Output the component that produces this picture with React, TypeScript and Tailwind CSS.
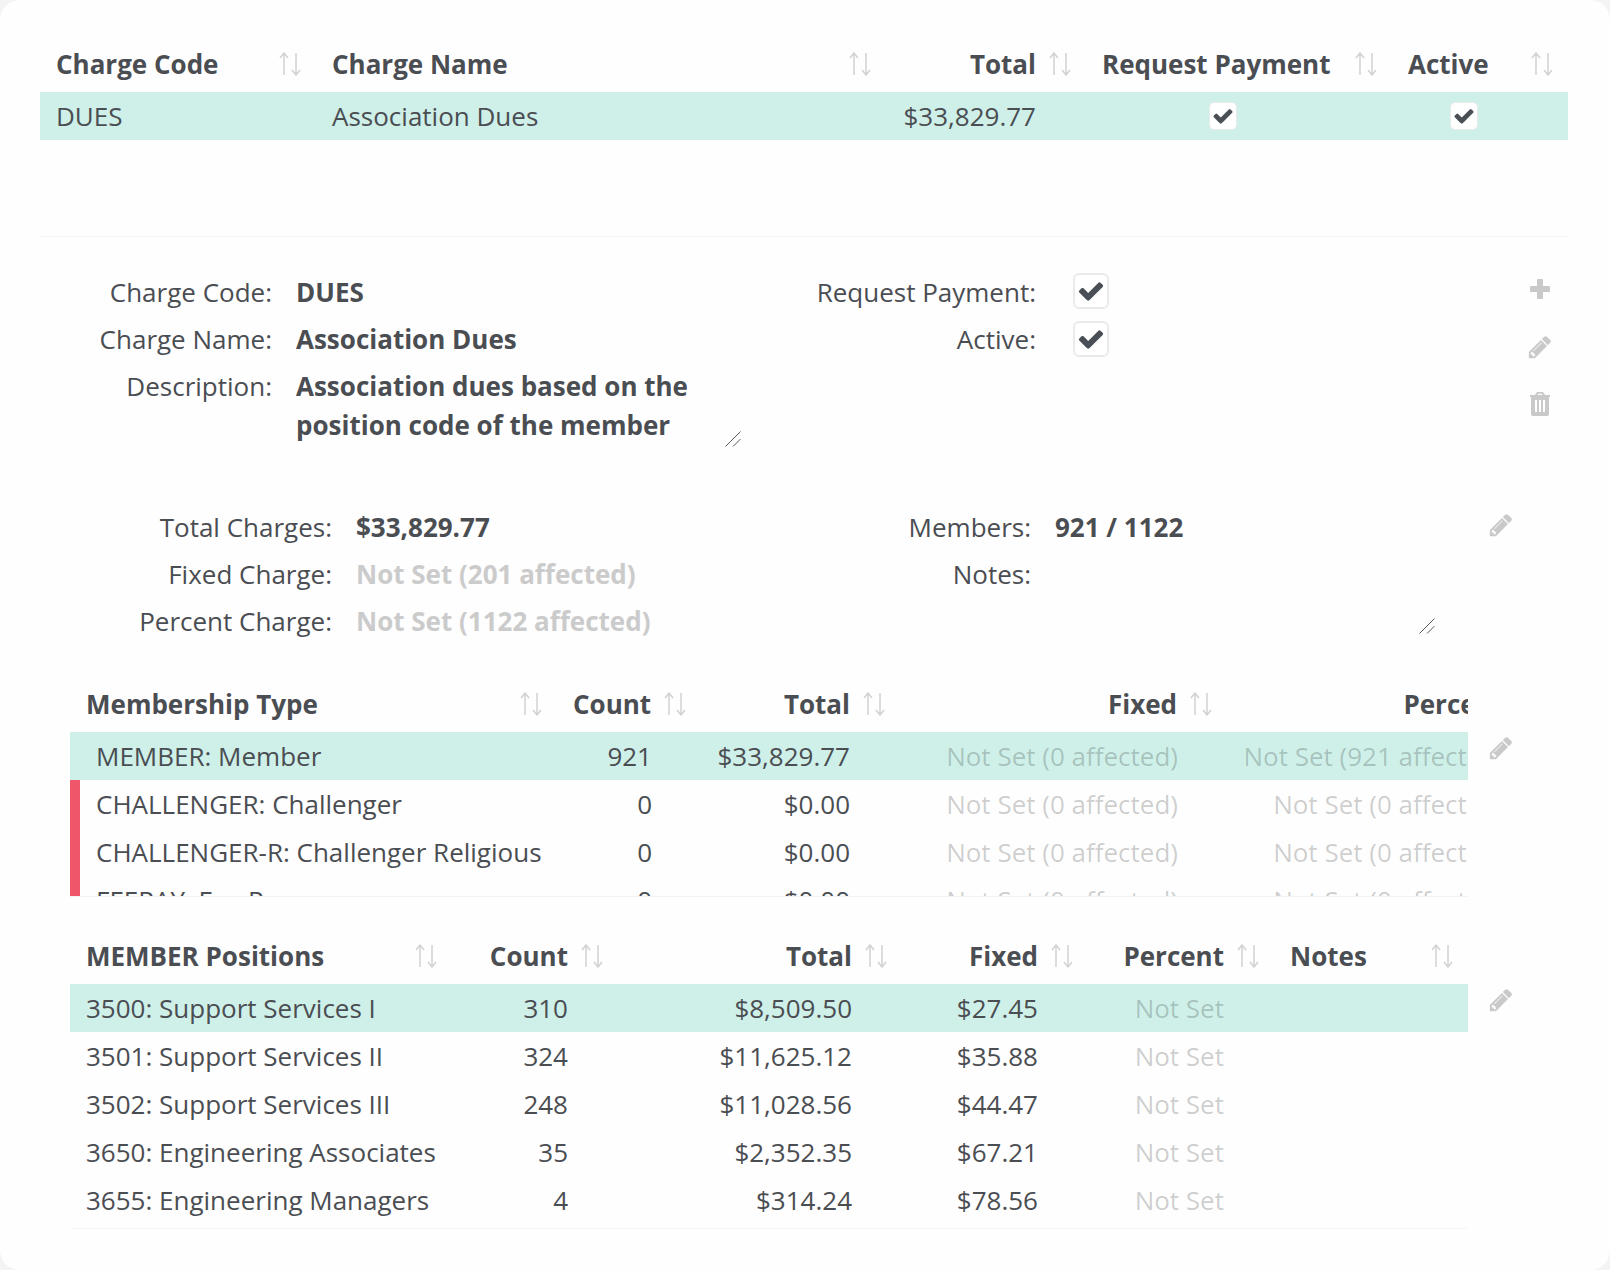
import React from "react";

function SortIcon() {
  return (
    <svg width="24" height="24" viewBox="0 0 24 24" fill="none" stroke="#d2d2d2" strokeWidth="1.5" className="shrink-0">
      <path d="M6 23V1M2 6l4-5 4 5" />
      <path d="M18 1v22M14 18l4 5 4-5" />
    </svg>
  );
}
function Pencil({ size = 26 }: { size?: number }) {
  return (
    <svg width={size} height={size} viewBox="0 0 1792 1792" fill="#c9c9c9" className="block">
      <path d="M491 1536l91-91-235-235-91 91v107h128v128h107zm523-928q0-22-22-22-10 0-17 7l-542 542q-7 7-7 17 0 22 22 22 10 0 17-7l542-542q7-7 7-17zm-54-192l416 416-832 832H128v-416zm683 96q0 53-37 90l-166 166-416-416 166-165q36-38 90-38 53 0 91 38l235 234q37 39 37 91z" />
    </svg>
  );
}
function Check({ size }: { size: number }) {
  return (
    <svg width={size} height={size} viewBox="0 0 1792 1792" fill="#4a4e55">
      <path d="M1671 566q0 40-28 68l-724 724-136 136q-28 28-68 28t-68-28l-136-136-362-362q-28-28-28-68t28-68l136-136q28-28 68-28t68 28l294 295 656-657q28-28 68-28t68 28l136 136q28 28 28 68z" />
    </svg>
  );
}
function Resizer() {
  return (
    <svg width="16" height="16" viewBox="0 0 16 16" stroke="#55585c" strokeWidth="1" fill="none">
      <path d="M0.5 15.5L15.5 0.5M8 15.5L15.5 8" />
    </svg>
  );
}
function Box({ big }: { big?: boolean }) {
  return big ? (
    <span className="flex h-[36px] w-[36px] items-center justify-center rounded-[6px] border-2 border-[#eaeaea] bg-white"><Check size={28} /></span>
  ) : (
    <span className="mx-auto flex h-[28px] w-[28px] items-center justify-center rounded-[5px] border border-[#eaeaea] bg-white"><Check size={22} /></span>
  );
}

type Col = { label: string; w: string; right?: boolean };

function Head({ cols }: { cols: Col[] }) {
  return (
    <thead>
      <tr>
        {cols.map((c) => (
          <th key={c.label} className={`${c.w} p-0 font-bold`}>
            <div className="flex h-[48px] items-center justify-between pb-[8px] pl-[16px] pr-[14px]">
              <span className={c.right ? "flex-1 text-right" : "flex-1 text-left"}>{c.label}</span>
              <span className="ml-[12px]"><SortIcon /></span>
            </div>
          </th>
        ))}
      </tr>
    </thead>
  );
}

const muted = "text-black/20";

const cols1: Col[] = [
  { label: "Charge Code", w: "w-[276px]" },
  { label: "Charge Name", w: "w-[570px]" },
  { label: "Total", w: "w-[200px]", right: true },
  { label: "Request Payment", w: "w-[306px]" },
  { label: "Active", w: "w-[176px]" },
];
const cols2: Col[] = [
  { label: "Membership Type", w: "w-[487px]" },
  { label: "Count", w: "w-[144px]", right: true },
  { label: "Total", w: "w-[199px]", right: true },
  { label: "Fixed", w: "w-[327px]", right: true },
  { label: "Percent", w: "w-[327px]", right: true },
];
const cols3: Col[] = [
  { label: "MEMBER Positions", w: "w-[382px]" },
  { label: "Count", w: "w-[166px]", right: true },
  { label: "Total", w: "w-[284px]", right: true },
  { label: "Fixed", w: "w-[186px]", right: true },
  { label: "Percent", w: "w-[186px]", right: true },
  { label: "Notes", w: "w-[194px]" },
];

const types = [
  ["MEMBER: Member", "921", "$33,829.77", "Not Set (0 affected)", "Not Set (921 affected)"],
  ["CHALLENGER: Challenger", "0", "$0.00", "Not Set (0 affected)", "Not Set (0 affected)"],
  ["CHALLENGER-R: Challenger Religious", "0", "$0.00", "Not Set (0 affected)", "Not Set (0 affected)"],
  ["FEEPAY: Fee Payer", "0", "$0.00", "Not Set (0 affected)", "Not Set (0 affected)"],
];
const positions = [
  ["3500: Support Services I", "310", "$8,509.50", "$27.45"],
  ["3501: Support Services II", "324", "$11,625.12", "$35.88"],
  ["3502: Support Services III", "248", "$11,028.56", "$44.47"],
  ["3650: Engineering Associates", "35", "$2,352.35", "$67.21"],
  ["3655: Engineering Managers", "4", "$314.24", "$78.56"],
];

function DetailRow({ label, labelW, children }: { label: string; labelW: string; children: React.ReactNode }) {
  return (
    <div className="flex h-[47px] items-center">
      <div className={`${labelW} shrink-0 text-right`}>{label}</div>
      <div className="ml-[24px] font-bold">{children}</div>
    </div>
  );
}

export default function App() {
  return (
    <div className="h-[1270px] w-[1610px] overflow-hidden bg-[#f4f4f4]">
      <div className="h-[1270px] w-[1610px] overflow-hidden rounded-[20px] bg-[#fefefe] text-[26px] leading-[48px] text-[#4a4d52]" style={{ fontFamily: '"Open Sans", sans-serif' }}>
        <div className="px-[40px] pt-[44px]">
          <table className="w-[1528px] table-fixed border-collapse">
            <Head cols={cols1} />
            <tbody>
              <tr className="h-[48px] bg-[#cff0e9]">
                <td className="pl-[16px]">DUES</td>
                <td className="pl-[16px]">Association Dues</td>
                <td className="pr-[50px] text-right">$33,829.77</td>
                <td className="pl-[17px] pr-[50px]"><Box /></td>
                <td className="pl-[17px] pr-[50px]"><Box /></td>
              </tr>
            </tbody>
          </table>
          <div className="mt-[96px] h-px w-[1528px] bg-[#f6f6f6]" />
        </div>

        {/* Charge details */}
        <div className="flex pl-[40px] pt-[31px]">
          <div className="w-[700px]">
            <DetailRow label="Charge Code:" labelW="w-[232px]">DUES</DetailRow>
            <DetailRow label="Charge Name:" labelW="w-[232px]">Association Dues</DetailRow>
            <div className="relative flex">
              <div className="mt-[1px] w-[232px] shrink-0 text-right leading-[47px]">Description:</div>
              <div className="ml-[24px] w-[420px] pb-[1px] pt-[5px] font-bold leading-[39px]">Association dues based on the position code of the member</div>
              <div className="absolute left-[685px] top-[69px]"><Resizer /></div>
            </div>
          </div>
          <div className="w-[369px]">
            <div className="flex h-[47px] items-center justify-end gap-[37px]">
              <span>Request Payment:</span>
              <span className="mb-[2px]"><Box big /></span>
            </div>
            <div className="flex h-[47px] items-center justify-end gap-[37px]">
              <span>Active:</span>
              <Box big />
            </div>
          </div>
          <div className="ml-[418px] flex flex-col items-center pt-[11px]">
            <svg width="20" height="20" viewBox="0 0 20 20" fill="#c9c9c9"><path d="M7 1a1 1 0 0 1 1-1h4a1 1 0 0 1 1 1v6h6a1 1 0 0 1 1 1v4a1 1 0 0 1-1 1h-6v6a1 1 0 0 1-1 1H8a1 1 0 0 1-1-1v-6H1a1 1 0 0 1-1-1V8a1 1 0 0 1 1-1h6z" /></svg>
            <span className="mt-[35px]"><Pencil /></span>
            <svg className="mt-[32px]" width="20" height="24" viewBox="0 0 20 24" fill="#c9c9c9"><path d="M7 0h6l2 3h5v2h-1v17a2 2 0 0 1-2 2H3a2 2 0 0 1-2-2V5H0V3h5zM7.5 3h5l-.8-1.300H8.300zM5 8v12h2V8zm4 0v12h2V8zm4 0v12h2V8z" fillRule="evenodd" /></svg>
          </div>
        </div>

        {/* Totals */}
        <div className="relative flex pl-[40px] pt-[57px]">
          <div className="w-[820px]">
            <DetailRow label="Total Charges:" labelW="w-[292px]">$33,829.77</DetailRow>
            <DetailRow label="Fixed Charge:" labelW="w-[292px]"><span className="text-[#cbcbcb]">Not Set (201 affected)</span></DetailRow>
            <DetailRow label="Percent Charge:" labelW="w-[292px]"><span className="text-[#cbcbcb]">Not Set (1122 affected)</span></DetailRow>
          </div>
          <div className="relative w-[610px]">
            <DetailRow label="Members:" labelW="w-[171px]">921 / 1122</DetailRow>
            <DetailRow label="Notes:" labelW="w-[171px]"> </DetailRow>
            <div className="absolute left-[559px] top-[115px]"><Resizer /></div>
          </div>
          <span className="ml-[18px] mt-[9px]"><Pencil /></span>
        </div>

        {/* Membership types */}
        <div className="mt-[40px] flex pl-[70px]">
          <div className="h-[213px] w-[1398px] overflow-hidden border-b border-[#f3f3f3]">
            <table className="w-[1484px] max-w-none table-fixed border-separate border-spacing-0">
              <Head cols={cols2} />
              <tbody>
                {types.map((r, i) => (
                  <tr key={r[0]} className={i === 0 ? "h-[48px] bg-[#cff0e9]" : "h-[48px]"}>
                    <td className={i === 0 ? "pl-[26px]" : "border-l-[10px] border-[#f0566a] pl-[16px]"}>{r[0]}</td>
                    <td className="pr-[49px] text-right">{r[1]}</td>
                    <td className="pr-[50px] text-right">{r[2]}</td>
                    <td className={`pr-[49px] text-right ${muted}`}>{r[3]}</td>
                    <td className={`whitespace-nowrap pr-[49px] text-right ${muted}`}>{r[4]}</td>
                  </tr>
                ))}
              </tbody>
            </table>
          </div>
          <span className="ml-[20px] mt-[51px]"><Pencil /></span>
        </div>

        {/* Positions */}
        <div className="mt-[39px] flex pl-[70px]">
          <div className="w-[1398px] border-b border-[#f6f6f6] pb-[4px]">
            <table className="w-[1398px] table-fixed border-collapse">
              <Head cols={cols3} />
              <tbody>
                {positions.map((r, i) => (
                  <tr key={r[0]} className={i === 0 ? "h-[48px] bg-[#cff0e9]" : "h-[48px]"}>
                    <td className="pl-[16px]">{r[0]}</td>
                    <td className="pr-[50px] text-right">{r[1]}</td>
                    <td className="pr-[50px] text-right">{r[2]}</td>
                    <td className="pr-[50px] text-right">{r[3]}</td>
                    <td className={`pr-[50px] text-right ${muted}`}>Not Set</td>
                    <td />
                  </tr>
                ))}
              </tbody>
            </table>
          </div>
          <span className="ml-[20px] mt-[51px]"><Pencil /></span>
        </div>
      </div>
    </div>
  );
}
